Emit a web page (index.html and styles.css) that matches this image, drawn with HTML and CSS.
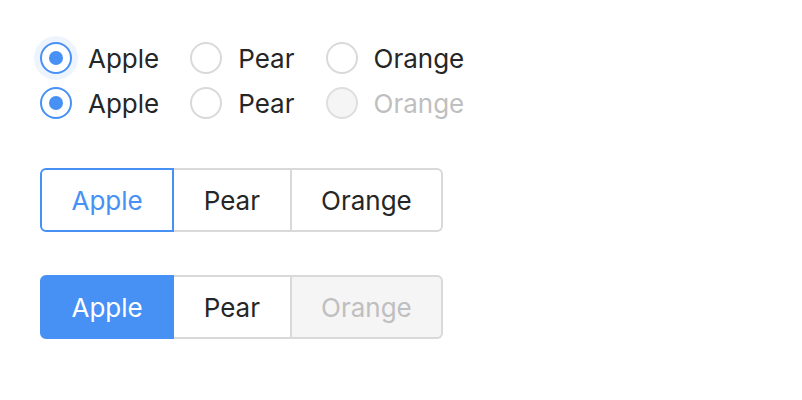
FILE: index.html
```html
<!DOCTYPE html>
<html>
<head>
<meta charset="utf-8">
<link rel="stylesheet" href="styles.css">
</head>
<body>
<div class="page">
  <div class="radio-row">
    <label class="radio checked focused"><span class="dot"></span><span class="label">Apple</span></label>
    <label class="radio"><span class="dot"></span><span class="label">Pear</span></label>
    <label class="radio"><span class="dot"></span><span class="label">Orange</span></label>
  </div>
  <div class="radio-row">
    <label class="radio checked"><span class="dot"></span><span class="label">Apple</span></label>
    <label class="radio"><span class="dot"></span><span class="label">Pear</span></label>
    <label class="radio disabled"><span class="dot"></span><span class="label">Orange</span></label>
  </div>

  <div class="btn-group outline">
    <span class="btn active">Apple</span>
    <span class="btn">Pear</span>
    <span class="btn">Orange</span>
  </div>

  <div class="btn-group solid">
    <span class="btn active">Apple</span>
    <span class="btn">Pear</span>
    <span class="btn disabled">Orange</span>
  </div>
</div>
</body>
</html>
```

FILE: styles.css
```css
html, body {
  margin: 0;
  padding: 0;
  background: #ffffff;
}

.page {
  padding: 35px 40px 0 40px;
  font-family: Inter, "Liberation Sans", sans-serif;
  font-size: 26px;
  color: #262626;
}

.radio-row {
  display: flex;
  align-items: center;
  height: 45px;
}

.radio {
  display: flex;
  align-items: center;
  margin-right: 31px;
}

.dot {
  box-sizing: border-box;
  width: 32px;
  height: 32px;
  border-radius: 50%;
  border: 2px solid #d9d9d9;
  background: #ffffff;
  display: flex;
  align-items: center;
  justify-content: center;
}

.radio .label {
  margin-left: 16px;
  padding-top: 1px;
}

.radio.checked .dot {
  border-color: #4791f5;
}

.radio.checked .dot::after {
  content: "";
  width: 14px;
  height: 14px;
  border-radius: 50%;
  background: #4791f5;
}

.radio.focused .dot {
  box-shadow: 0 0 0 6px #eef4fe;
}

.radio.disabled .dot {
  background: #f5f5f5;
  border-color: #dedede;
}

.radio.disabled .label {
  color: #bfbfbf;
}

.btn-group {
  display: flex;
  margin-top: 43px;
}

.btn {
  box-sizing: border-box;
  height: 64px;
  display: flex;
  align-items: center;
  padding: 0 29.5px;
  border: 2px solid #d9d9d9;
  border-left-width: 0;
  background: #ffffff;
}

.btn:first-child {
  border-left-width: 2px;
  border-radius: 6px 0 0 6px;
}

.btn:last-child {
  border-radius: 0 6px 6px 0;
}

.outline .btn.active {
  border-color: #4791f5;
  color: #4791f5;
}

.solid .btn.active {
  border-color: #4791f5;
  background: #4791f5;
  color: #ffffff;
}

.btn.disabled {
  background: #f5f5f5;
  color: #bfbfbf;
}
```
